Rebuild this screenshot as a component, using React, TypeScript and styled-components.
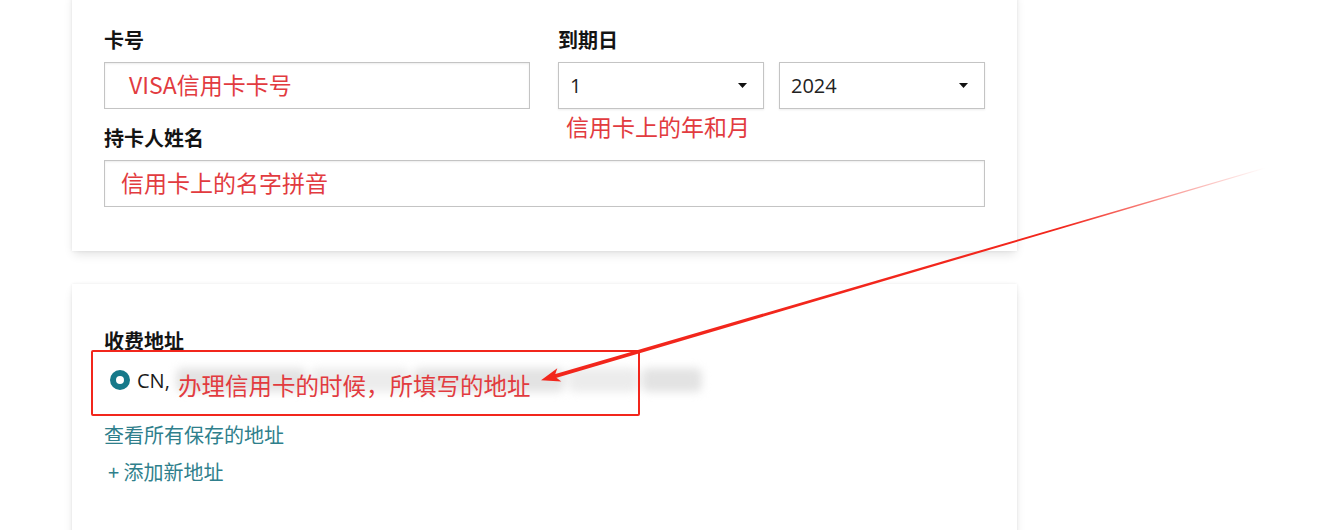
import React from "react";
import styled, { createGlobalStyle } from "styled-components";

const GlobalStyle = createGlobalStyle`
  html, body {
    margin: 0;
    padding: 0;
    background: #fff;
  }
  body {
    font-family: "Open Sans", "Noto Sans CJK SC", sans-serif;
    color: #111;
  }
`;

const RED = "#e23b3f";
const TEAL = "#2f7f8c";

const ArrowOverlay: React.FC = () => {
  // tip (542,380) -> tail (1265,168)
  return (
    <StyledArrow width={1320} height={530} viewBox="0 0 1320 530">
      <defs>
        <linearGradient
          id="fade"
          gradientUnits="userSpaceOnUse"
          x1="542"
          y1="380"
          x2="1265"
          y2="168"
        >
          <stop offset="0" stopColor="#f2261c" stopOpacity="1" />
          <stop offset="0.72" stopColor="#f2261c" stopOpacity="1" />
          <stop offset="1" stopColor="#f2261c" stopOpacity="0" />
        </linearGradient>
      </defs>
      <polygon
        points="554.1,378.5 552.9,374.7 1264.9,167.6 1265.1,168.4"
        fill="url(#fade)"
      />
      <polygon
        points="541,380.3 557.3,368.2 554.5,376.3 561.3,381.6"
        fill="#f2261c"
      />
    </StyledArrow>
  );
};

type InputProps = { indent?: number; children?: React.ReactNode };

const TextBox: React.FC<InputProps> = ({ indent = 16, children }) => (
  <StyledInput $indent={indent}>{children}</StyledInput>
);

const Select: React.FC<{ value: string }> = ({ value }) => (
  <StyledSelect>
    <span>{value}</span>
    <svg width="9" height="5" viewBox="0 0 9 5">
      <polygon points="0,0 9,0 4.5,5" fill="#111" />
    </svg>
  </StyledSelect>
);

export default function App() {
  return (
    <Page>
      <GlobalStyle />
      <Cards>
        <CardOne>
          <TopRow>
            <Field $width={426}>
              <Label>卡号</Label>
              <TextBox indent={24}>
                <RedText>VISA信用卡卡号</RedText>
              </TextBox>
            </Field>
            <Field $width={427}>
              <Label>到期日</Label>
              <SelectRow>
                <Select value="1" />
                <Select value="2024" />
              </SelectRow>
              <Hint>信用卡上的年和月</Hint>
            </Field>
          </TopRow>
          <NameField>
            <Label>持卡人姓名</Label>
            <TextBox>
              <RedText>信用卡上的名字拼音</RedText>
            </TextBox>
          </NameField>
        </CardOne>

        <CardTwo>
          <Label>收费地址</Label>
          <AddressRow>
            <Radio />
            <span>CN,</span>
            <Blurred>
              <i style={{ width: 130 }} />
              <i style={{ width: 100 }} />
              <i style={{ width: 150 }} />
              <i style={{ width: 70 }} />
              <i style={{ width: 60 }} />
            </Blurred>
          </AddressRow>
          <Link $top={31}>查看所有保存的地址</Link>
          <Link $top={13} $shift={4}>+ 添加新地址</Link>

          <NoteBox />
          <NoteText>办理信用卡的时候，所填写的地址</NoteText>
        </CardTwo>
      </Cards>
      <ArrowOverlay />
    </Page>
  );
}

const Page = styled.div`
  position: relative;
  width: 1320px;
  height: 530px;
  overflow: hidden;
  background: #fff;
`;

const StyledArrow = styled.svg`
  position: absolute;
  left: 0;
  top: 0;
  pointer-events: none;
`;

const Cards = styled.div`
  display: flex;
  flex-direction: column;
  width: 945px;
  margin-left: 72px;
  gap: 33px;
`;

const Card = styled.div`
  position: relative;
  box-sizing: border-box;
  background: #fff;
  box-shadow: 0 5px 10px -2px rgba(0, 0, 0, 0.12), 0 0 3px rgba(0, 0, 0, 0.08);
  padding-left: 32px;
  padding-right: 32px;
`;

const CardOne = styled(Card)`
  margin-top: -10px;
  padding-top: 38px;
  padding-bottom: 44px;
`;

const CardTwo = styled(Card)`
  padding-top: 45px;
  padding-bottom: 80px;
  display: flex;
  flex-direction: column;
  align-items: flex-start;
`;

const TopRow = styled.div`
  display: flex;
  gap: 28px;
`;

const Field = styled.div<{ $width: number }>`
  position: relative;
  width: ${p => p.$width}px;
  display: flex;
  flex-direction: column;
  gap: 10px;
`;

const NameField = styled.div`
  display: flex;
  flex-direction: column;
  gap: 10px;
  margin-top: 17px;
  width: 881px;
`;

const Label = styled.div`
  font-family: "Noto Sans CJK SC", sans-serif;
  font-weight: 700;
  font-size: 20px;
  line-height: 24px;
  color: #141414;
`;

const StyledInput = styled.div<{ $indent: number }>`
  box-sizing: border-box;
  height: 47px;
  border: 1px solid #c4c4c4;
  box-shadow: inset 0 1px 2px rgba(0, 0, 0, 0.08);
  display: flex;
  align-items: center;
  padding-left: ${p => p.$indent}px;
  padding-bottom: 3px;
  background: #fff;
`;

const RedText = styled.span`
  font-family: "Noto Sans CJK SC", sans-serif;
  font-size: 23px;
  color: ${RED};
  line-height: 28px;
`;

const SelectRow = styled.div`
  display: flex;
  gap: 15px;
`;

const StyledSelect = styled.div`
  box-sizing: border-box;
  flex: 1;
  height: 47px;
  border: 1px solid #c4c4c4;
  box-shadow: 0 1px 2px rgba(0, 0, 0, 0.08);
  display: flex;
  align-items: center;
  justify-content: space-between;
  padding: 0 16px 0 11px;
  font-size: 20px;
  color: #222;
  background: #fff;
`;

const Hint = styled.div`
  position: absolute;
  left: 8px;
  top: 84px;
  font-family: "Noto Sans CJK SC", sans-serif;
  font-size: 23px;
  line-height: 28px;
  color: ${RED};
  white-space: nowrap;
`;

const AddressRow = styled.div`
  display: flex;
  align-items: center;
  margin-top: 15px;
  height: 24px;
  font-size: 20px;
  color: #1a1a1a;
  margin-left: 6px;

  > span {
    margin-left: 7px;
  }
`;

const Radio = styled.div`
  box-sizing: border-box;
  width: 20px;
  height: 20px;
  border-radius: 50%;
  border: 6px solid #16798a;
  background: #fff;
`;

const Blurred = styled.div`
  display: flex;
  gap: 4px;
  margin-left: 6px;
  filter: blur(4px);

  > i {
    display: block;
    height: 24px;
    background: #e3e3e3;
    border-radius: 6px;
  }
  > i:nth-child(2n) {
    background: #ececec;
  }
`;

const Link = styled.div<{ $top: number; $shift?: number }>`
  margin-top: ${p => p.$top}px;
  margin-left: ${p => p.$shift || 0}px;
  font-family: "Noto Sans CJK SC", sans-serif;
  font-size: 20px;
  line-height: 24px;
  color: ${TEAL};
`;

const NoteBox = styled.div`
  position: absolute;
  left: 19px;
  top: 66px;
  width: 549px;
  height: 66px;
  box-sizing: border-box;
  border: 2px solid #f2261c;
  border-radius: 2px;
`;

const NoteText = styled.div`
  position: absolute;
  left: 106px;
  top: 87px;
  font-family: "Noto Sans CJK SC", sans-serif;
  font-size: 23.5px;
  line-height: 28px;
  color: ${RED};
  white-space: nowrap;
`;
